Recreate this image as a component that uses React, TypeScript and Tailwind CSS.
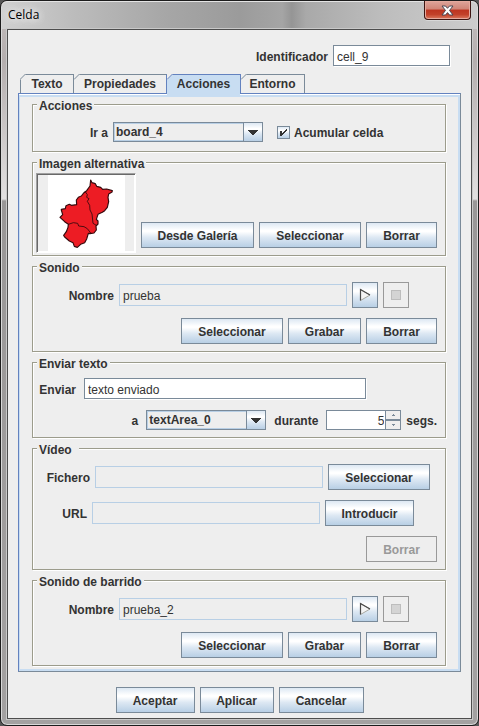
import type { ReactNode } from "react";

const buttonFace =
  "border border-[#7a8a99] bg-[linear-gradient(180deg,#dde8f3_0%,#ffffff_30%,#ffffff_36%,#dde8f3_60%,#b8cfe5_100%)]";

const disabledFace = "border border-[#999999] bg-[#eeeeee] text-[#999999]";

function Button({ children, width, disabled = false }: { children: ReactNode; width: string; disabled?: boolean }) {
  return (
    <button
      type="button"
      disabled={disabled}
      className={`h-[26px] shrink-0 pt-[2px] leading-4 font-bold whitespace-nowrap ${width} ${
        disabled ? disabledFace : buttonFace
      }`}
    >
      {children}
    </button>
  );
}

function Group({ title, className, children }: { title: string; className: string; children: ReactNode }) {
  return (
    <fieldset className="min-w-0 border border-[#9c9c8c] shadow-[1px_1px_0_#ffffff,inset_1px_1px_0_#ffffff]">
      <legend className="ml-1 min-w-[42px] bg-[#eeeeee] px-[2px] pt-[3px] leading-[12px] font-bold">{title}</legend>
      <div className={className}>{children}</div>
    </fieldset>
  );
}

function Label({ htmlFor, width, children }: { htmlFor: string; width: string; children: ReactNode }) {
  return (
    <label htmlFor={htmlFor} className={`shrink-0 pt-[2px] text-right leading-4 font-bold whitespace-nowrap ${width}`}>
      {children}
    </label>
  );
}

const textBox =
  "h-[21px] border border-[#7a8a99] bg-white pt-[2px] pl-[3px] shadow-[1px_1px_0_#ffffff] outline-none";

const readOnlyBox = "h-[22px] min-w-0 flex-1 border border-[#b8cfe5] bg-[#eeeeee] pt-[2px] pl-[3px] outline-none";

function Combo({ id, value, width }: { id: string; value: string; width: string }) {
  return (
    <div className={`relative h-5 shrink-0 ${width}`}>
      <select
        id={id}
        defaultValue={value}
        className="block h-5 w-full appearance-none border border-[#7a8a99] bg-[#eeeeee] pl-[2px] font-bold shadow-[inset_0_0_0_1px_#b8cfe5] outline-none"
      >
        <option>{value}</option>
      </select>
      <span
        className={`pointer-events-none absolute top-0 right-0 flex h-5 w-5 items-center justify-center ${buttonFace}`}
      >
        <svg width="10" height="5" viewBox="0 0 10 5" shapeRendering="crispEdges" aria-hidden="true">
          <path d="M0 0h10v1H0zM1 1h8v1H1zM2 2h6v1H2zM3 3h4v1H3zM4 4h2v1H4z" fill="#333333" />
        </svg>
      </span>
    </div>
  );
}

function SoundGroup({ title, id, value }: { title: string; id: string; value: string }) {
  return (
    <Group title={title} className="pt-2 pb-[7px]">
      <div className="flex items-center gap-[5px] pr-9">
        <Label htmlFor={id} width="w-[81px]">
          Nombre
        </Label>
        <input id={id} readOnly defaultValue={value} className={readOnlyBox} />
        <button
          type="button"
          aria-label="Reproducir"
          className={`flex h-[26px] w-[26px] shrink-0 items-center justify-center ${buttonFace}`}
        >
          <svg width="12" height="14" viewBox="0 0 12 14" aria-hidden="true">
            <path d="M1.5 1.5L11 7 1.5 12.5z" fill="#f4f4f4" stroke="#a8a8a0" />
            <path d="M1.5 12.5V1.5L11 7" fill="none" stroke="#4a4a4a" strokeWidth="1.2" />
          </svg>
        </button>
        <button
          type="button"
          aria-label="Detener"
          disabled
          className={`flex h-[26px] w-[26px] shrink-0 items-center justify-center ${disabledFace}`}
        >
          <span className="h-[10px] w-[10px] border border-[#bdbdbd] bg-[#d4d4d4]" />
        </button>
      </div>
      <div className="mt-[10px] flex justify-end gap-[5px] pr-2">
        <Button width="w-[102px]">Seleccionar</Button>
        <Button width="w-[73px]">Grabar</Button>
        <Button width="w-[71px]">Borrar</Button>
      </div>
    </Group>
  );
}

const tabs = [
  { name: "Texto", width: "w-[54px]" },
  { name: "Propiedades", width: "w-[93px]" },
  { name: "Acciones", width: "w-[74px]" },
  { name: "Entorno", width: "w-[64px]" },
];

function Tab({ name, width, index }: { name: string; width: string; index: number }) {
  const selected = name === "Acciones";
  const beforeSelected = name === "Propiedades";
  return (
    <button
      type="button"
      role="tab"
      aria-selected={selected}
      className={`relative h-[19px] border-t border-r pt-px font-bold ${width} ${index === 0 ? "border-l" : ""} ${
        selected ? "border-[#6382bf] bg-[#c8ddf2]" : "border-[#7a8a99]"
      } ${beforeSelected ? "border-r-[#6382bf]" : ""}`}
    >
      {selected && <span className="absolute top-full right-0 left-0 h-[3px] bg-[#c8ddf2]" />}
      <svg
        className={`absolute -top-px ${index === 0 ? "-left-px" : "left-0"}`}
        width="6"
        height="6"
        viewBox="0 0 6 6"
        aria-hidden="true"
      >
        <path d="M0 0H6L0 6z" fill="#eeeeee" />
        <path d="M0 5.5L5.5 0" stroke={selected ? "#6382bf" : "#7a8a99"} fill="none" />
      </svg>
      {name}
    </button>
  );
}

function MapPicture() {
  return (
    <svg width="77" height="76" viewBox="42 15 231 228" className="bg-white" role="img" aria-label="Mapa">
      <g stroke="#35090c" strokeLinejoin="round">
        <path
          fill="#ed1c24"
          strokeWidth="3.5"
          d="M170 30L174 38 184 41 188 49 200 52 206 58 218 57 235 62 234 66 224 72 222 82 224 95 220 112 212 122 205 127 192 133 187 148 192 153 192 162 186 168 187 180 180 189 168 191 163 190 158 207 152 218 140 223 130 232 121 229 117 218 106 213 92 201 89 196 97 185 99 180 102 172 103 163 92 155 78 142 86 134 82 120 82 118 94 116 96 107 106 103 112 106 128 104 127 90 133 82 142 78 150 68 158 62 168 48z"
        />
        <path
          fill="none"
          strokeWidth="2.6"
          d="M153 64L160 74 158 82 165 86 160 94 167 106 168 120 174 132 177 160 187 166M103 163L118 158 131 160 134 168 150 170 160 176 170 189"
        />
      </g>
    </svg>
  );
}

export default function App() {
  return (
    <div className="min-h-screen bg-[#555555] font-['Liberation_Sans',Arial,sans-serif] text-[12px] leading-[15px] text-[#333333]">
      <div className="flex min-h-screen flex-col rounded-[7px] border border-[#1c1c1c] bg-[linear-gradient(180deg,#c4bebe_0px,#b4aeae_60px,#e2e0e0_198px,#999797_200px,#a3a1a1_100%)] px-[6px] pb-[6px] shadow-[inset_0_0_0_1px_#d8d8d8]">
        <header className="-mx-[5px] flex h-7 items-start justify-between rounded-t-[6px] border-t border-[#e4e4e4] bg-[linear-gradient(90deg,#d0d0d0_0%,#bcbcbc_15%,#a6a6a6_35%,#9b9b9b_50%,#a5a5a5_59%,#959595_61%,#a9a9a9_64%,#bdbdbd_80%,#cccccc_100%)] pr-[6px] pl-[6px]">
          <h1 className="pt-[5px] font-['Open_Sans','Noto_Sans',sans-serif] text-black [text-shadow:0_0_8px_#ffffff,0_0_8px_#ffffff]">
            Celda
          </h1>
          <button
            type="button"
            aria-label="Cerrar"
            className="-mt-px flex h-[19px] w-[47px] items-center justify-center rounded-b-[4px] border border-t-0 border-[#3d1512] bg-[linear-gradient(180deg,#dea59b_0%,#d08577_45%,#bd3420_50%,#c2412a_75%,#dc7a60_100%)] shadow-[inset_0_0_0_1px_#e5aa9e,0_1px_0_#d8d8d8]"
          >
            <svg width="13" height="11" viewBox="0 0 13 11" aria-hidden="true">
              <path
                d="M1 1H4.5L6.5 3.3 8.5 1H12L8.5 5.4 12 10H8.5L6.5 7.6 4.5 10H1L4.5 5.4z"
                fill="#ffffff"
                stroke="#4a4652"
                strokeLinejoin="round"
              />
            </svg>
          </button>
        </header>

        <main className="flex-1 border border-[#4d4d4d] bg-[#eeeeee] px-[10px] pt-[15px] pb-[5px] shadow-[0_0_0_1px_#c9c9c9]">
          <div className="flex items-center justify-end gap-[5px] pr-[11px]">
            <Label htmlFor="identificador" width="w-auto">
              Identificador
            </Label>
            <input id="identificador" defaultValue="cell_9" className={`w-[117px] ${textBox}`} />
          </div>

          <div role="tablist" className="relative mt-2 flex pl-[2px]">
            {tabs.map((tab, index) => (
              <Tab key={tab.name} name={tab.name} width={tab.width} index={index} />
            ))}
          </div>

          <div
            role="tabpanel"
            className="border border-t-[#6382bf] border-r-[#7a8a99] border-b-[#7a8a99] border-l-[#6382bf] shadow-[inset_0_1px_0_#ffffff,inset_1px_3px_0_#c8ddf2,inset_-2px_-2px_0_#c8ddf2]"
          >
            <div className="flex flex-col gap-[3px] pt-[3px] pr-[14px] pb-[5px] pl-[13px]">
              <Group title="Acciones" className="pt-[10px] pb-[9px]">
                <div className="flex items-center gap-[5px]">
                  <Label htmlFor="ir-a" width="w-[75px]">
                    Ir a
                  </Label>
                  <Combo id="ir-a" value="board_4" width="w-[150px]" />
                  <div className="ml-[9px] flex items-center gap-1">
                    <span className="relative h-[13px] w-[13px]">
                      <input
                        id="acumular"
                        type="checkbox"
                        defaultChecked
                        className={`peer block h-[13px] w-[13px] appearance-none ${buttonFace}`}
                      />
                      <svg
                        className="pointer-events-none absolute top-[3px] left-[3px] hidden peer-checked:block"
                        width="7"
                        height="7"
                        viewBox="0 0 7 7"
                        shapeRendering="crispEdges"
                        aria-hidden="true"
                      >
                        <path d="M0 2h2v5H0zM2 4h1v2H2zM3 3h1v2H3zM4 2h1v2H4zM5 1h1v2H5zM6 0h1v2H6z" fill="#333333" />
                      </svg>
                    </span>
                    <Label htmlFor="acumular" width="w-auto">
                      Acumular celda
                    </Label>
                  </div>
                </div>
              </Group>

              <Group title="Imagen alternativa" className="pt-[3px] pr-2 pb-[2px] pl-[3px]">
                <div className="flex items-end justify-between">
                  <div className="flex h-20 w-[100px] shrink-0 justify-center border border-t-[#a0a0a0] border-r-white border-b-white border-l-[#a0a0a0] p-px shadow-[inset_1px_1px_0_#696969,inset_-1px_-1px_0_#ffffff]">
                    <MapPicture />
                  </div>
                  <div className="flex gap-[5px] pb-[5px]">
                    <Button width="w-[113px]">Desde Galería</Button>
                    <Button width="w-[102px]">Seleccionar</Button>
                    <Button width="w-[71px]">Borrar</Button>
                  </div>
                </div>
              </Group>

              <SoundGroup title="Sonido" id="sonido-nombre" value="prueba" />

              <Group title="Enviar texto" className="pt-2 pb-[7px]">
                <div className="flex items-center gap-2 pr-[79px]">
                  <Label htmlFor="enviar" width="w-[43px]">
                    Enviar
                  </Label>
                  <input id="enviar" defaultValue="texto enviado" className={`min-w-0 flex-1 ${textBox}`} />
                </div>
                <div className="mt-[11px] flex items-center justify-end gap-2 pr-2">
                  <Label htmlFor="destino" width="w-auto">
                    a
                  </Label>
                  <Combo id="destino" value="textArea_0" width="w-[120px]" />
                  <Label htmlFor="durante" width="w-auto">
                    durante
                  </Label>
                  <div className="flex items-center gap-[5px]">
                    <div className="flex h-5 w-[75px] border border-[#7a8a99] bg-white">
                      <input
                        id="durante"
                        defaultValue="5"
                        inputMode="numeric"
                        className="min-w-0 flex-1 bg-white pt-[2px] pr-px text-right outline-none"
                      />
                      <div className="flex w-[15px] flex-col border-l border-[#7a8a99] bg-[#eeeeee]">
                        <button
                          type="button"
                          aria-label="Aumentar"
                          className="flex flex-1 items-center justify-center border-b-2 border-[#7a8a99]"
                        >
                          <svg width="3" height="2" viewBox="0 0 3 2" shapeRendering="crispEdges" aria-hidden="true">
                            <path d="M1 0h1v1h1v1H0V1h1z" fill="#7a8a99" />
                          </svg>
                        </button>
                        <button
                          type="button"
                          aria-label="Disminuir"
                          className="flex flex-1 items-center justify-center"
                        >
                          <svg width="3" height="2" viewBox="0 0 3 2" shapeRendering="crispEdges" aria-hidden="true">
                            <path d="M0 0h3v1H2v1H1V1H0z" fill="#7a8a99" />
                          </svg>
                        </button>
                      </div>
                    </div>
                    <Label htmlFor="durante" width="w-auto">
                      segs.
                    </Label>
                  </div>
                </div>
              </Group>

              <Group title="Vídeo" className="pt-2 pb-[7px]">
                <div className="flex flex-col gap-[10px]">
                  <div className="flex items-center gap-[5px] pr-[15px]">
                    <Label htmlFor="fichero" width="w-[57px]">
                      Fichero
                    </Label>
                    <input id="fichero" readOnly className={readOnlyBox} />
                    <Button width="w-[102px]">Seleccionar</Button>
                  </div>
                  <div className="flex items-center gap-[5px] pr-[31px]">
                    <Label htmlFor="url" width="w-[54px]">
                      URL
                    </Label>
                    <input id="url" readOnly className={readOnlyBox} />
                    <Button width="w-[89px]">Introducir</Button>
                  </div>
                  <div className="flex justify-end pr-2">
                    <Button width="w-[71px]" disabled>
                      Borrar
                    </Button>
                  </div>
                </div>
              </Group>

              <SoundGroup title="Sonido de barrido" id="barrido-nombre" value="prueba_2" />
            </div>
          </div>

          <footer className="mt-[15px] flex justify-center gap-[5px]">
            <Button width="w-[79px]">Aceptar</Button>
            <Button width="w-[74px]">Aplicar</Button>
            <Button width="w-[85px]">Cancelar</Button>
          </footer>
        </main>
      </div>
    </div>
  );
}
